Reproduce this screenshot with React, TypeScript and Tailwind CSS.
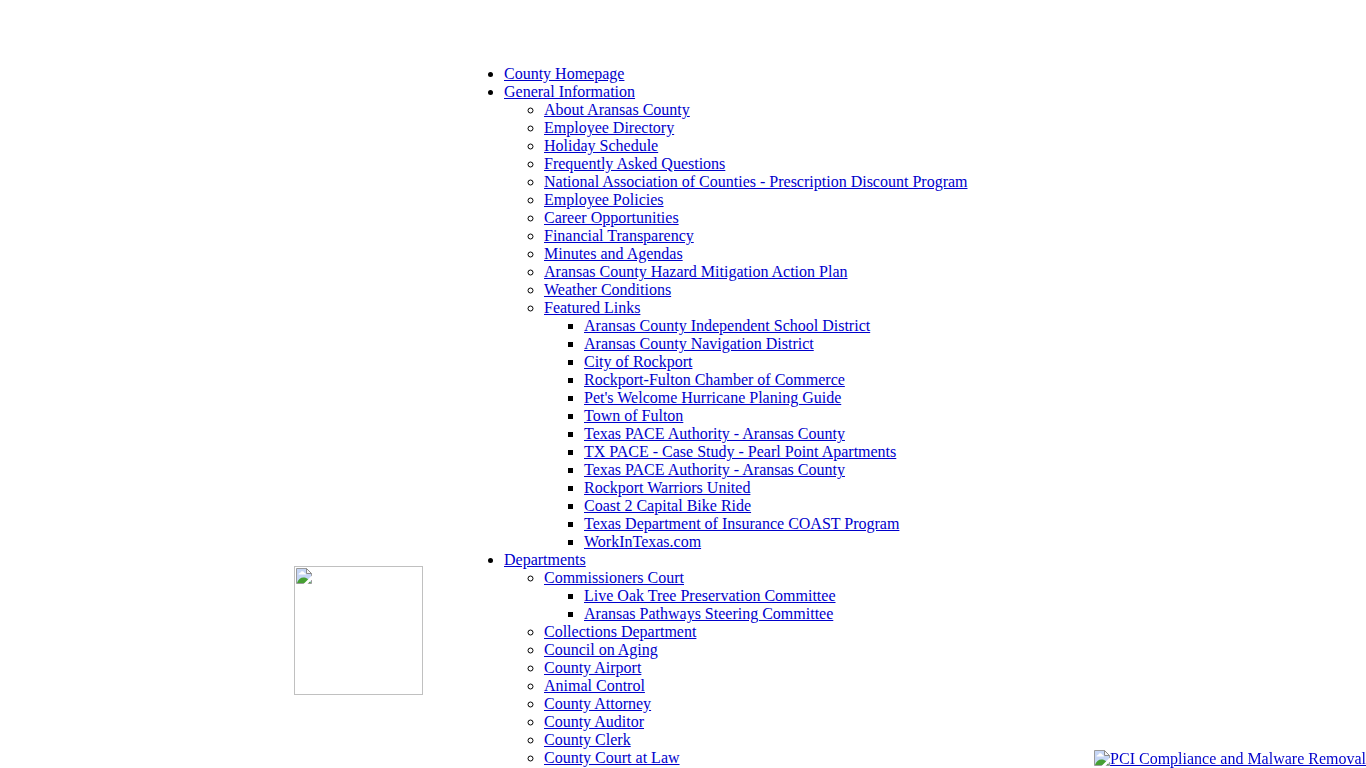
type MenuItem = {
        label: string;
        children?: MenuItem[];
};

const featuredLinks: MenuItem[] = [
        { label: "Aransas County Independent School District" },
        { label: "Aransas County Navigation District" },
        { label: "City of Rockport" },
        { label: "Rockport-Fulton Chamber of Commerce" },
        { label: "Pet's Welcome Hurricane Planing Guide" },
        { label: "Town of Fulton" },
        { label: "Texas PACE Authority - Aransas County" },
        { label: "TX PACE - Case Study - Pearl Point Apartments" },
        { label: "Texas PACE Authority - Aransas County" },
        { label: "Rockport Warriors United" },
        { label: "Coast 2 Capital Bike Ride" },
        { label: "Texas Department of Insurance COAST Program" },
        { label: "WorkInTexas.com" },
];

const menu: MenuItem[] = [
        { label: "County Homepage" },
        {
                label: "General Information",
                children: [
                        { label: "About Aransas County" },
                        { label: "Employee Directory" },
                        { label: "Holiday Schedule" },
                        { label: "Frequently Asked Questions" },
                        { label: "National Association of Counties - Prescription Discount Program" },
                        { label: "Employee Policies" },
                        { label: "Career Opportunities" },
                        { label: "Financial Transparency" },
                        { label: "Minutes and Agendas" },
                        { label: "Aransas County Hazard Mitigation Action Plan" },
                        { label: "Weather Conditions" },
                        { label: "Featured Links", children: featuredLinks },
                ],
        },
        {
                label: "Departments",
                children: [
                        {
                                label: "Commissioners Court",
                                children: [
                                        { label: "Live Oak Tree Preservation Committee" },
                                        { label: "Aransas Pathways Steering Committee" },
                                ],
                        },
                        { label: "Collections Department" },
                        { label: "Council on Aging" },
                        { label: "County Airport" },
                        { label: "Animal Control" },
                        { label: "County Attorney" },
                        { label: "County Auditor" },
                        { label: "County Clerk" },
                        { label: "County Court at Law" },
                ],
        },
];

const bullets = ["list-disc", "list-[circle]", "list-[square]"];

function MenuList({ items, level = 0 }: { items: MenuItem[]; level?: number }) {
        return (
                <ul className={`pl-10 ${bullets[level]}`}>
                        {items.map((item, index) => (
                                <li key={index}>
                                        <a href="#" className="text-[#0000cc] underline">{item.label}</a>
                                        {item.children && <MenuList items={item.children} level={level + 1} />}
                                </li>
                        ))}
                </ul>
        );
}

function MissingImage() {
        return (
                <svg viewBox="0 0 16 16" className="h-4 w-4 shrink-0" aria-hidden="true">
                        <path d="M0.5 0.5H10.5L15.5 5.5V15.5H0.5Z" fill="#c6d6f5" />
                        <path d="M2.5 6.5C2.500 5.500 3.500 5 4.200 5C4.500 3.800 5.300 3.200 6.300 3.200C7.500 3.200 8.200 4 8.400 5C9.300 5 10 5.600 10 6.500Z" fill="#fff" />
                        <path d="M1 15C2 11.500 4.500 9.500 7.500 9.500C10.500 9.500 12.500 11 15 15Z" fill="#46a033" />
                        <path d="M0.5 0.5H10.5L15.5 5.5V15.5H0.5Z" fill="none" stroke="#9b9b9b" />
                        <path d="M10.5 0.5V5.5H15.5Z" fill="#f4f4f4" stroke="#8c8c8c" />
                        <path d="M7.500 16L16 7.500V11.500L11.500 16Z" fill="#fff" />
                </svg>
        );
}

export default function App() {
        return (
                <div className="bg-white font-['Liberation_Serif','Times_New_Roman',serif] text-base leading-[18px] text-black">
                        <div className="mx-auto flex max-w-[778px] items-end pt-[65px]">
                                <div className="w-[170px] shrink-0 pb-18">
                                        <a href="#" aria-label="Aransas County" className="block h-[129px] w-[129px] border border-[#c0c0c0] p-px">
                                                <MissingImage />
                                        </a>
                                </div>
                                <nav>
                                        <MenuList items={menu} />
                                </nav>
                        </div>
                        <a href="#" className="fixed right-0 bottom-0 flex text-[#0000cc] underline">
                                <MissingImage />
                                <span>PCI Compliance and Malware Removal</span>
                        </a>
                </div>
        );
}
